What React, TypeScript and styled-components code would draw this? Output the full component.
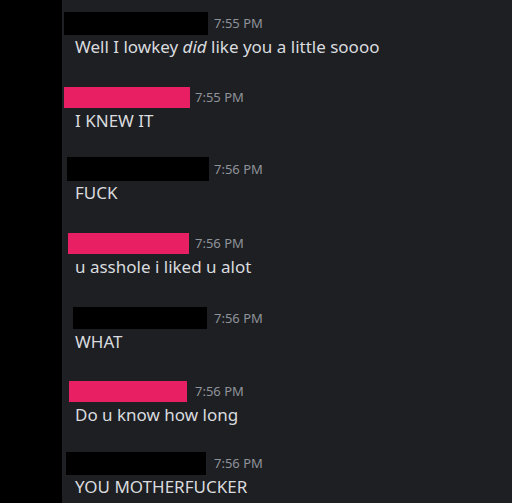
import React from "react";
import styled, { createGlobalStyle } from "styled-components";

const Global = createGlobalStyle`
  html, body { margin: 0; padding: 0; background: #1e1f23; }
  body { font-family: "Noto Sans", "Open Sans", sans-serif; }
`;

const Page = styled.div`
  display: flex;
  width: 512px;
  height: 503px;
  overflow: hidden;
  background: #1e1f23;
`;

const Strip = styled.div`
  width: 62px;
  flex: none;
  background: #000;
`;

const Chat = styled.div`
  flex: 1;
  display: flex;
  flex-direction: column;
  padding-top: 11px;
`;

const Message = styled.div`
  height: 73px;
  flex: none;
  display: flex;
  flex-direction: column;
`;

const Header = styled.div<{ $dy: number }>`
  display: flex;
  align-items: center;
  height: 24px;
  margin-top: ${(p) => p.$dy}px;
`;

const Redaction = styled.div<{ $w: number; $h: number; $x: number; $pink?: boolean }>`
  width: ${(p) => p.$w}px;
  height: ${(p) => p.$h}px;
  margin-left: ${(p) => p.$x}px;
  background: ${(p) => (p.$pink ? "#e91f63" : "#000")};
  flex: none;
`;

const Time = styled.span<{ $x: number }>`
  margin-left: ${(p) => p.$x}px;
  font-size: 13px;
  color: #8f939a;
  line-height: 16px;
`;

const Text = styled.div`
  margin-top: 2px;
  padding-left: 13px;
  font-size: 17px;
  line-height: 20px;
  color: #d9dbdf;
  white-space: nowrap;
`;

type Msg = {
  x: number;
  w: number;
  h: number;
  dy: number;
  pink?: boolean;
  time: string;
  text: React.ReactNode;
};

const messages: Msg[] = [
  { x: 2, w: 144, h: 23, dy: 0, time: "7:55 PM", text: <>Well I lowkey <em>did</em> like you a little soooo</> },
  { x: 2, w: 126, h: 21, dy: 1, pink: true, time: "7:55 PM", text: "I KNEW IT" },
  { x: 5, w: 142, h: 24, dy: 0, time: "7:56 PM", text: "FUCK" },
  { x: 6, w: 121, h: 21, dy: 1, pink: true, time: "7:56 PM", text: "u asshole i liked u alot" },
  { x: 11, w: 134, h: 22, dy: 3, time: "7:56 PM", text: "WHAT" },
  { x: 7, w: 118, h: 21, dy: 3, pink: true, time: "7:56 PM", text: "Do u know how long" },
  { x: 4, w: 140, h: 23, dy: 2, time: "7:56 PM", text: "YOU MOTHERFUCKER" },
];

export default function App() {
  return (
    <>
      <Global />
      <Page>
        <Strip />
        <Chat>
          {messages.map((m, i) => (
            <Message key={i}>
              <Header $dy={m.dy}>
                <Redaction $w={m.w} $h={m.h} $x={m.x} $pink={m.pink} />
                <Time $x={214 - 62 - m.x - m.w - (m.pink ? 19 : 0)}>{m.time}</Time>
              </Header>
              <Text>{m.text}</Text>
            </Message>
          ))}
        </Chat>
      </Page>
    </>
  );
}
